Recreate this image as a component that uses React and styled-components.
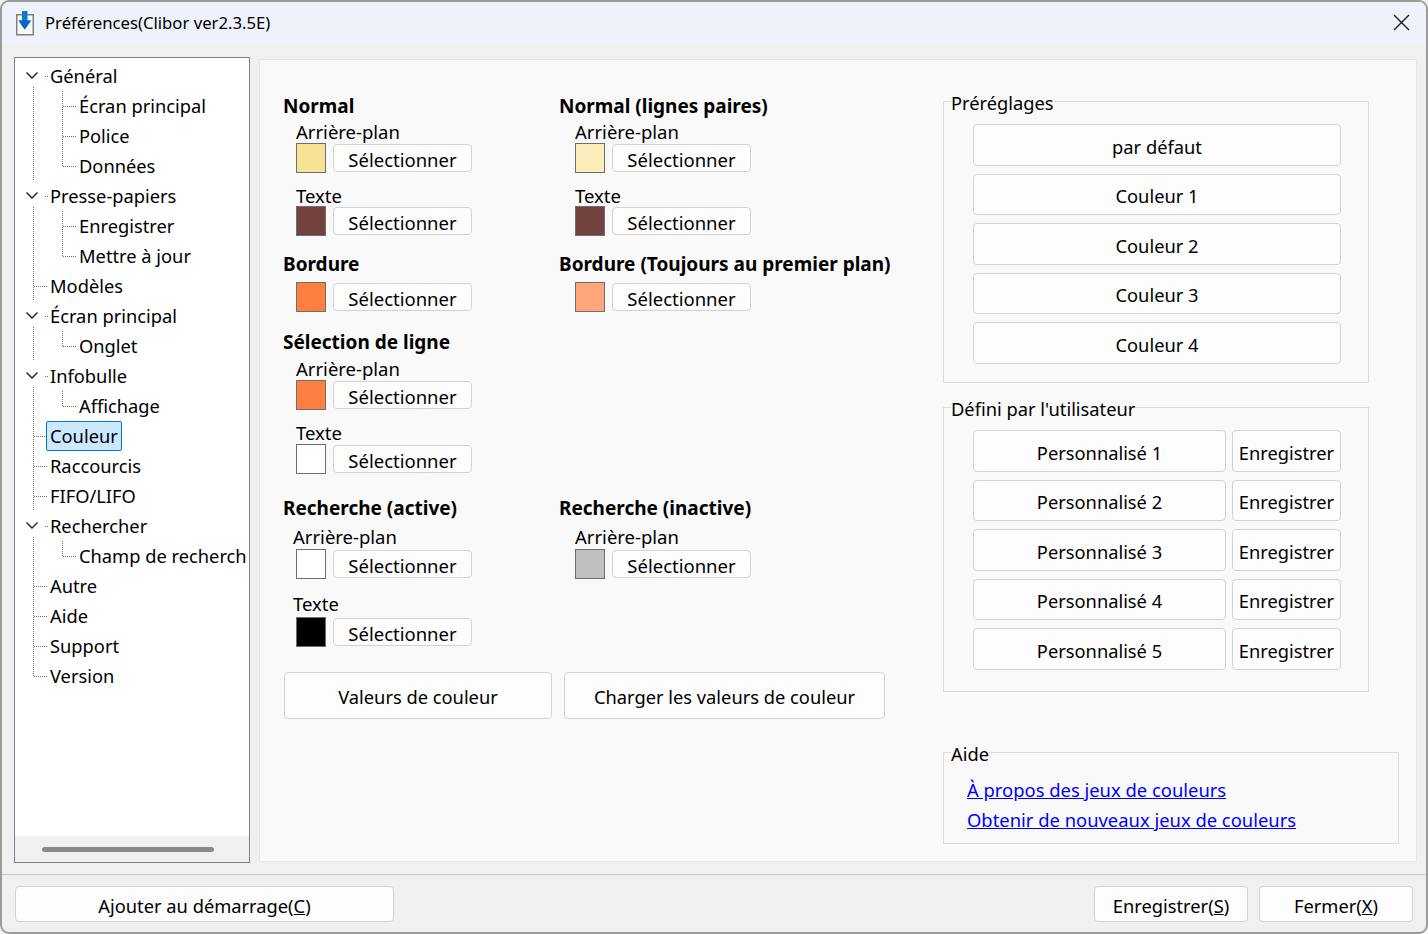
import React from "react";
import styled, { createGlobalStyle } from "styled-components";

const Global = createGlobalStyle`
  html, body { margin: 0; padding: 0; background: #f4f4f4; }
  body { font-family: "Noto Sans", "Open Sans", sans-serif; font-size: 18.3px; color: #000; }
`;

const Win = styled.div`
  width: 1428px; height: 934px; box-sizing: border-box;
  border: 2px solid #9b9b9b; border-radius: 9px; overflow: hidden;
  background: #f0f0f0; display: flex; flex-direction: column;
`;
const TitleBar = styled.header`
  height: 43px; box-sizing: border-box; flex: none; background: #eef3fb; display: flex; align-items: center;
  padding: 0 16px 0 14px; font-size: 16.7px;
`;
const TitleText = styled.span` margin-left: 9px; flex: 1; margin-bottom: 2px; `;
const CloseIcon = styled.svg` margin-bottom: 2px; `;
const Body = styled.main`
  flex: 1; display: flex; align-items: flex-start; padding: 12px 9px 0 12px; gap: 9px; min-height: 0;
`;
const TreePanel = styled.nav`
  width: 236px; height: 806px; box-sizing: border-box; flex: none;
  border: 1px solid #7d8490; background: #fff; display: flex; flex-direction: column;
`;
const TreeList = styled.div` flex: 1; padding-top: 3px; overflow: hidden; `;
const TreeRow = styled.div` height: 30px; display: flex; white-space: nowrap; padding-right: 1px; overflow: hidden; `;
const Gutter = styled.svg` flex: none; display: block; overflow: visible; width: ${p => p.$w}px; height: 30px; `;
const TreeLabel = styled.span`
  box-sizing: border-box; height: 30px; line-height: 28px; padding: 0 3px; min-width: 0; overflow: hidden;
  border: 1px solid ${p => p.$sel ? "#0078d7" : "transparent"};
  border-radius: 2px; background: ${p => p.$sel ? "#cce8ff" : "transparent"};
`;
const ScrollTrack = styled.div` height: 26px; flex: none; background: #f0f0f0; display: flex; align-items: center; padding-left: 27px; `;
const ScrollThumb = styled.div` width: 172px; height: 5px; border-radius: 3px; background: #8a8a8a; `;

const Content = styled.section`
  width: 1158px; height: 803px; box-sizing: border-box; margin-top: 2px; flex: none;
  background: #f9f9f9; border: 1px solid #e6e6e6; display: flex; padding-left: 23px;
`;
const LeftCol = styled.div` width: 660px; flex: none; padding-top: 34px; `;
const RightCol = styled.div` width: 456px; flex: none; padding-top: 29px; display: flex; flex-direction: column; `;

const SectionRow = styled.div` display: grid; grid-template-columns: 276px 1fr; margin-top: ${p => p.$mt || 0}px; `;
const Heading = styled.div` font-weight: 700; font-size: 19px; height: 24px; line-height: 24px; white-space: nowrap; `;
const FieldLabel = styled.div`
  height: 23px; line-height: ${p => p.$lh || 23}px; margin-top: ${p => p.$mt}px; padding-left: ${p => p.$indent}px; font-size: 18.5px;
`;
const SwatchRow = styled.div` display: flex; align-items: center; gap: 7px; margin-top: ${p => p.$mt || 0}px; padding-left: ${p => p.$indent}px; `;
const Swatch = styled.div`
  width: 30px; height: 30px; box-sizing: border-box; border: 1px solid #6e6e6e; background: ${p => p.$c};
`;
const Btn = styled.button`
  font: inherit; color: #000; box-sizing: border-box; background: #fdfdfd; border: 1px solid #d2d2d2; border-radius: 4px;
  display: flex; align-items: center; justify-content: center; padding: ${p => p.$pt ?? 2}px 0 0; white-space: nowrap;
  width: ${p => p.$w}px; height: ${p => p.$h}px; flex: none;
`;
const SelectBtn = styled(Btn)` font-size: 18.5px; `;
const ActionRow = styled.div` display: flex; gap: 12px; margin: 25px 0 0 1px; `;

const Group = styled.fieldset`
  margin: 0 0 ${p => p.$mb || 0}px; padding: ${p => p.$pt}px 0 ${p => p.$pb}px 29px; border: 1px solid #dcdcdc;
  width: ${p => p.$w}px; box-sizing: border-box; display: flex; flex-direction: column; gap: 8px; min-width: 0;
`;
const Legend = styled.legend` padding: 4px 0 0; margin-left: -22px; line-height: 20px; `;
const UserRow = styled.div` display: flex; gap: 6px; `;
const HelpGroup = styled(Group)` gap: 0; padding: 11px 0 8px 23px; `;
const HelpLegend = styled(Legend)` margin-left: -16px; `;
const HelpLink = styled.a` color: #0000ff; text-decoration: underline; height: 30px; line-height: 30px; font-size: 18.4px; `;

const Footer = styled.footer`
  height: 58px; flex: none; margin-top: 12px; border-top: 1px solid #c8c8c8; box-sizing: border-box;
  display: flex; align-items: flex-start; padding: 11px 13px 0 13px; gap: 11px;
`;
const Spacer = styled.div` flex: 1; `;

const tree = [
  ["Général", 0, 1], ["Écran principal", 1, 0, "first"], ["Police", 1], ["Données", 1, 0, "last"],
  ["Presse-papiers", 0, 1], ["Enregistrer", 1, 0, "first"], ["Mettre à jour", 1, 0, "last"],
  ["Modèles", 0], ["Écran principal", 0, 1], ["Onglet", 1, 0, "only"],
  ["Infobulle", 0, 1], ["Affichage", 1, 0, "only"], ["Couleur", 0, 0, "sel"], ["Raccourcis", 0], ["FIFO/LIFO", 0],
  ["Rechercher", 0, 1], ["Champ de recherche", 1, 0, "only"], ["Autre", 0], ["Aide", 0], ["Support", 0], ["Version", 0, 0, "end"],
];

const Dots = props => <line stroke="#6f6f6f" strokeWidth="1" strokeDasharray="1 1" shapeRendering="crispEdges" {...props} />;

function TreeGutter({ level, parent, flag }) {
  const w = level ? 60 : 31;
  return (
    <Gutter $w={w} viewBox={`0 0 ${w} 30`}>
      {parent ? (
        <>
          <path d="M11.5 11.5 L17 17 L22.5 11.5" fill="none" stroke="#222" strokeWidth="1.4" />
          <Dots x1="18.5" x2="18.5" y1="26" y2="30" />
          <Dots x1="30" x2="33" y1="15.5" y2="15.5" />
        </>
      ) : level ? (
        <>
          <Dots x1="18.5" x2="18.5" y1="0" y2="30" />
          <Dots x1="47.5" x2="47.5" y1={flag === "first" || flag === "only" ? -2 : 0} y2={flag === "last" || flag === "only" ? 15 : 30} />
          <Dots x1="48" x2="62" y1="15.5" y2="15.5" />
        </>
      ) : (
        <>
          <Dots x1="18.5" x2="18.5" y1="0" y2={flag === "end" ? 15 : 30} />
          <Dots x1="19" x2="33" y1="15.5" y2="15.5" />
        </>
      )}
    </Gutter>
  );
}

const Field = ({ label, color, mt, lh, labelIndent, indent, swatchMt }) => (
  <>
    {label && <FieldLabel $mt={mt} $lh={lh} $indent={labelIndent ?? indent}>{label}</FieldLabel>}
    <SwatchRow $indent={indent} $mt={swatchMt}>
      <Swatch $c={color} />
      <SelectBtn $w={139} $h={28}>Sélectionner</SelectBtn>
    </SwatchRow>
  </>
);

const BROWN = "#74423e", ORANGE = "#ff7f41";

export default function App() {
  return (
    <Win>
      <Global />
      <TitleBar>
        <svg width="20" height="26" viewBox="0 0 20 26">
          <path d="M0.75 3.75h16.5v20h-16.5z" fill="#fbfbfb" stroke="#7f7f7f" strokeWidth="1.5" />
          <path d="M6 0h5.5v9.5h3.5l-6.25 9-6.25-9h3.5z" fill="#0a78d4" />
          <path d="M2.5 9.5h12.5l-6.25 9z" fill="#0668b8" />
        </svg>
        <TitleText>Préférences(Clibor ver2.3.5E)</TitleText>
        <CloseIcon width="17" height="17" viewBox="0 0 17 17">
          <path d="M1 1 L16 16 M16 1 L1 16" stroke="#1a1a1a" strokeWidth="1.4" fill="none" />
        </CloseIcon>
      </TitleBar>
      <Body>
        <TreePanel>
          <TreeList>
            {tree.map(([t, level, parent, flag], i) => (
              <TreeRow key={i}>
                <TreeGutter level={level} parent={parent} flag={flag} />
                <TreeLabel $sel={flag === "sel"}>{t}</TreeLabel>
              </TreeRow>
            ))}
          </TreeList>
          <ScrollTrack><ScrollThumb /></ScrollTrack>
        </TreePanel>
        <Content>
          <LeftCol>
            <SectionRow>
              <div>
                <Heading>Normal</Heading>
                <Field label="Arrière-plan" color="#f7e296" mt={2} indent={13} />
                <Field label="Texte" color={BROWN} mt={10} lh={25} indent={13} />
              </div>
              <div>
                <Heading>Normal (lignes paires)</Heading>
                <Field label="Arrière-plan" color="#fbeebb" mt={2} indent={16} />
                <Field label="Texte" color={BROWN} mt={10} lh={25} indent={16} />
              </div>
            </SectionRow>
            <SectionRow $mt={16}>
              <div>
                <Heading>Bordure</Heading>
                <Field color={ORANGE} swatchMt={6} indent={13} />
              </div>
              <div>
                <Heading>Bordure (Toujours au premier plan)</Heading>
                <Field color="#ffa67c" swatchMt={6} indent={16} />
              </div>
            </SectionRow>
            <SectionRow $mt={18}>
              <div>
                <Heading>Sélection de ligne</Heading>
                <Field label="Arrière-plan" color={ORANGE} mt={3} indent={13} />
                <Field label="Texte" color="#ffffff" mt={11} indent={13} />
              </div>
            </SectionRow>
            <SectionRow $mt={22}>
              <div>
                <Heading>Recherche (active)</Heading>
                <Field label="Arrière-plan" color="#ffffff" mt={6} lh={21} indent={13} labelIndent={10} />
                <Field label="Texte" color="#000000" mt={15} lh={19} indent={13} labelIndent={10} />
              </div>
              <div>
                <Heading>Recherche (inactive)</Heading>
                <Field label="Arrière-plan" color="#c0c0c0" mt={6} lh={21} indent={16} />
              </div>
            </SectionRow>
            <ActionRow>
              <Btn $w={268} $h={47}>Valeurs de couleur</Btn>
              <Btn $w={321} $h={47}>Charger les valeurs de couleur</Btn>
            </ActionRow>
          </LeftCol>
          <RightCol>
            <Group $w={426} $pt={11} $pb={18} $mb={12.5}>
              <Legend>Préréglages</Legend>
              {["par défaut", "Couleur 1", "Couleur 2", "Couleur 3", "Couleur 4"].map(t => (
                <Btn key={t} $w={368} $h={41.5} $pt={3}>{t}</Btn>
              ))}
            </Group>
            <Group $w={426} $pt={11} $pb={21.5} $mb={48}>
              <Legend>Défini par l'utilisateur</Legend>
              {[1, 2, 3, 4, 5].map(n => (
                <UserRow key={n}>
                  <Btn $w={253} $h={41.5} $pt={3}>Personnalisé {n}</Btn>
                  <Btn $w={109} $h={41.5} $pt={3}>Enregistrer</Btn>
                </UserRow>
              ))}
            </Group>
            <HelpGroup $w={456}>
              <HelpLegend>Aide</HelpLegend>
              <HelpLink href="#">À propos des jeux de couleurs</HelpLink>
              <HelpLink href="#">Obtenir de nouveaux jeux de couleurs</HelpLink>
            </HelpGroup>
          </RightCol>
        </Content>
      </Body>
      <Footer>
        <Btn $w={379} $h={36}><span>Ajouter au démarrage(<u>C</u>)</span></Btn>
        <Spacer />
        <Btn $w={154} $h={36}><span>Enregistrer(<u>S</u>)</span></Btn>
        <Btn $w={154} $h={36}><span>Fermer(<u>X</u>)</span></Btn>
      </Footer>
    </Win>
  );
}
